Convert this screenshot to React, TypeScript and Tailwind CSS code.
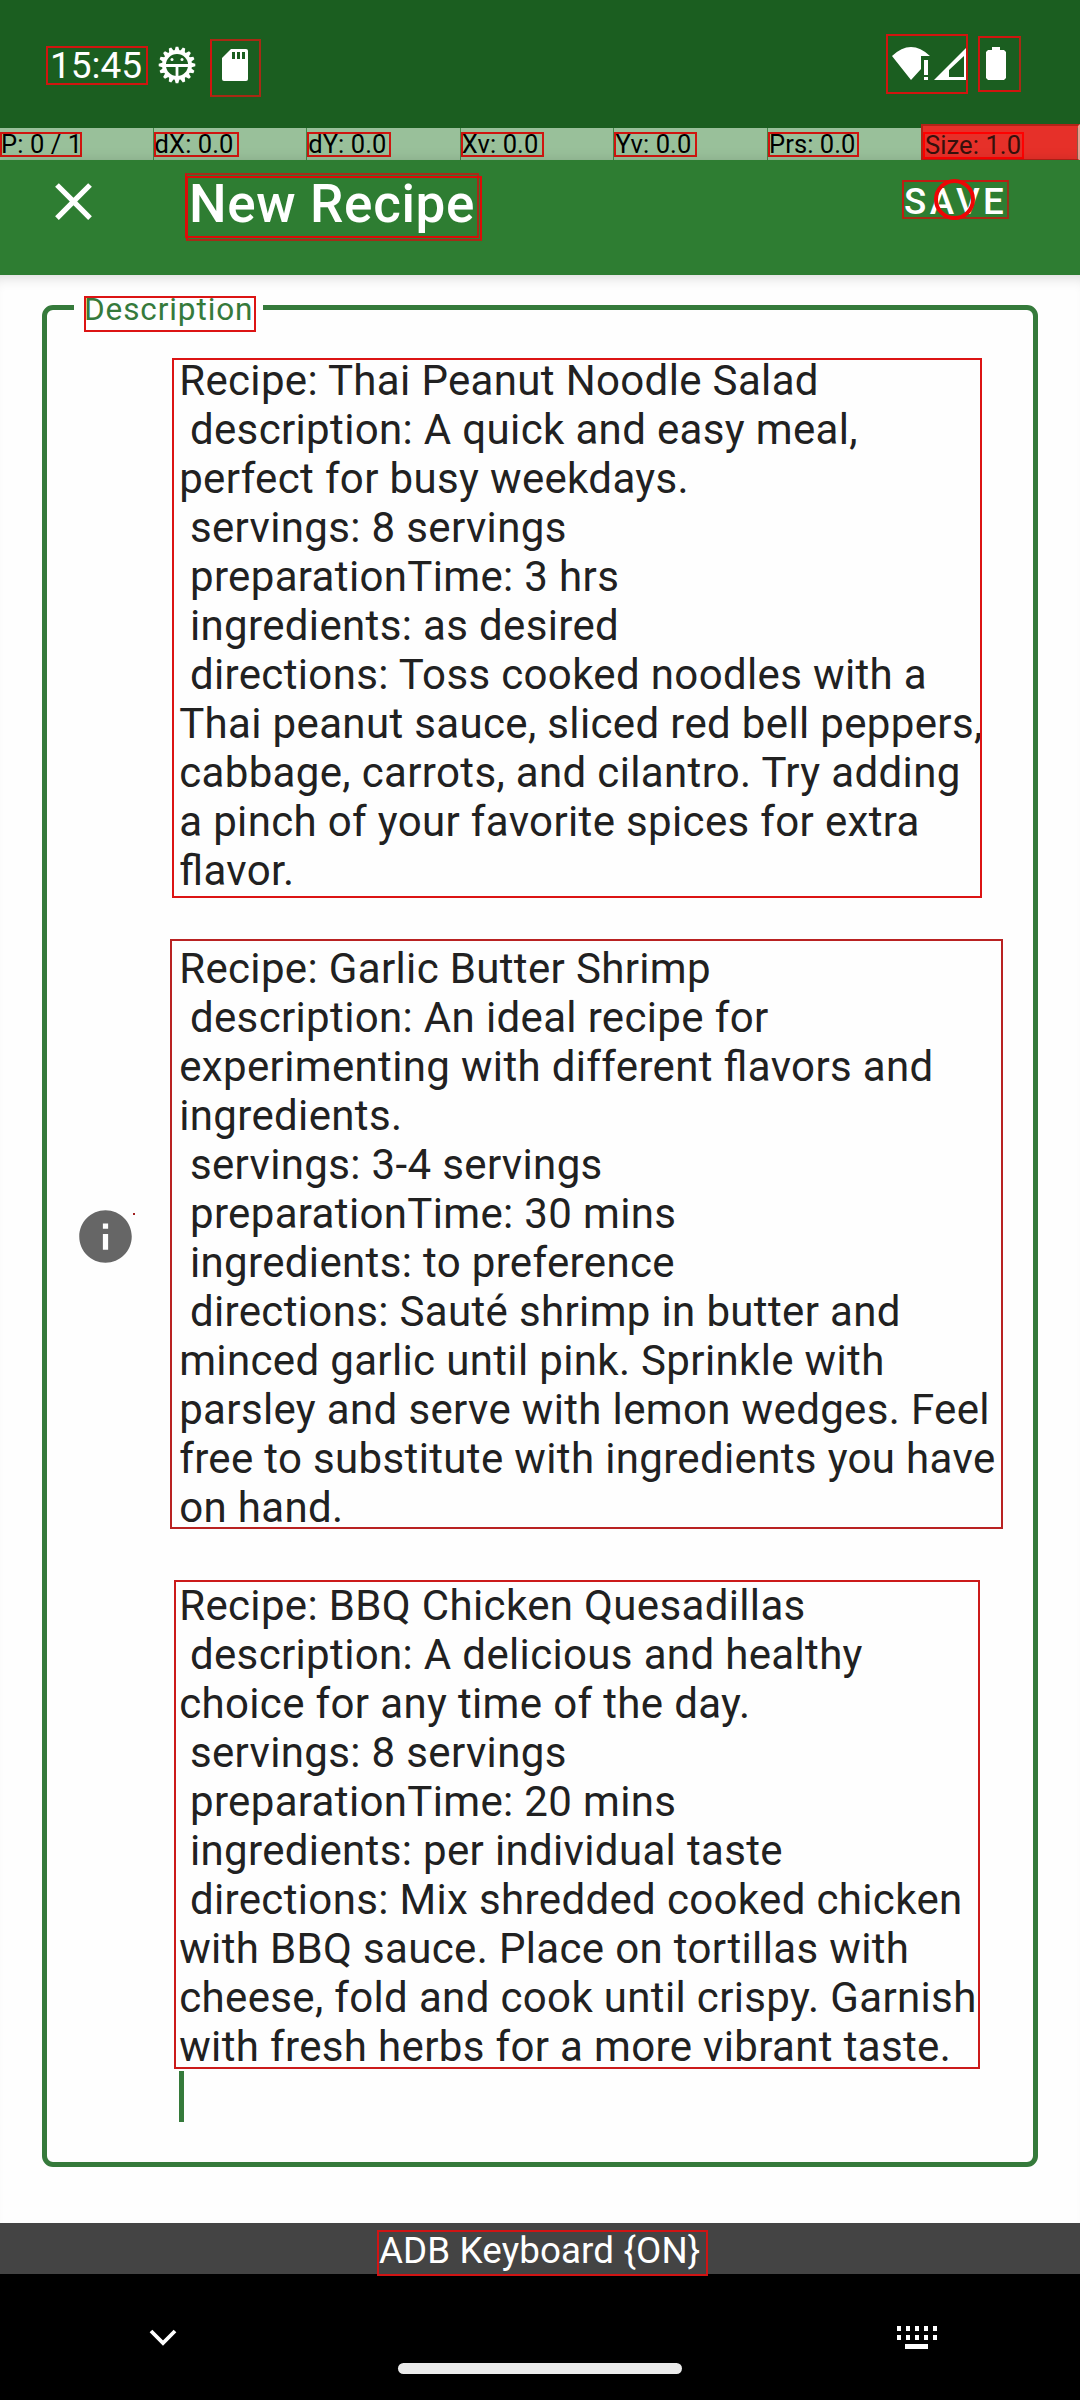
const recipes = [
  {
    box: "left-[172px] top-[83px] w-[810px] h-[540px] border-[#dc1414]",
    text: `Recipe: Thai Peanut Noodle Salad
 description: A quick and easy meal,
perfect for busy weekdays.
 servings: 8 servings
 preparationTime: 3 hrs
 ingredients: as desired
 directions: Toss cooked noodles with a
Thai peanut sauce, sliced red bell peppers,
cabbage, carrots, and cilantro. Try adding
a pinch of your favorite spices for extra
flavor.`,
  },
  {
    box: "left-[170px] top-[664px] w-[833px] h-[590px] border-[#b92222]",
    text: `Recipe: Garlic Butter Shrimp
 description: An ideal recipe for
experimenting with different flavors and
ingredients.
 servings: 3-4 servings
 preparationTime: 30 mins
 ingredients: to preference
 directions: Sauté shrimp in butter and
minced garlic until pink. Sprinkle with
parsley and serve with lemon wedges. Feel
free to substitute with ingredients you have
on hand.`,
  },
  {
    box: "left-[174px] top-[1305px] w-[806px] h-[489px] border-[#cb1a1a]",
    text: `Recipe: BBQ Chicken Quesadillas
 description: A delicious and healthy
choice for any time of the day.
 servings: 8 servings
 preparationTime: 20 mins
 ingredients: per individual taste
 directions: Mix shredded cooked chicken
with BBQ sauce. Place on tortillas with
cheese, fold and cook until crispy. Garnish
with fresh herbs for a more vibrant taste.`,
  },
];

const stats = [
  { label: "P: 0 / 1", box: "w-[82px]" },
  { label: "dX: 0.0", box: "w-[85px]" },
  { label: "dY: 0.0", box: "w-[84px]" },
  { label: "Xv: 0.0", box: "w-[83px]" },
  { label: "Yv: 0.0", box: "w-[83px]" },
  { label: "Prs: 0.0", box: "w-[91px]" },
];

const teeth = Array.from({ length: 16 }, (_, i) => i * 22.5);

function StatusBar() {
  return (
    <header className="flex h-32 items-start justify-between bg-[#1b5e20] pr-[59px] pl-[46px] text-white">
      <div className="flex items-start">
        <div className="mt-[46px] flex h-[39px] w-[102px] items-center border-2 border-[#d0150f] pl-[2px] text-[37px] leading-none whitespace-nowrap">
          15:45
        </div>
        <svg className="mt-[46px] ml-[10px] h-[38px] w-[38px]" viewBox="-19 -19 38 38">
          {teeth.map((a) => (
            <path key={a} d="M-2.8 -13 L-1.3 -18.3 H1.3 L2.8 -13Z" fill="white" transform={`rotate(${a})`} />
          ))}
          <circle r="13" fill="none" stroke="white" strokeWidth="3.8" />
          <path d="M-12 0.5H12M0 1V13" stroke="white" strokeWidth="2.8" />
          <circle cx="-5" cy="-5.5" r="1.5" fill="white" />
          <circle cx="5" cy="-5.5" r="1.5" fill="white" />
        </svg>
        <div className="mt-[39px] ml-[14px] h-[58px] w-[51px] border-2 border-[#a82a14] border-l-[#d0150f] pt-2 pl-[10px]">
          <svg className="h-8 w-[26px]" viewBox="0 0 26 32">
            <path d="M9 0H24Q26 0 26 2V30Q26 32 24 32H2Q0 32 0 30V9Z" fill="white" />
            <path d="M10 3h3v7h-3zM15 3h3v7h-3zM20 3h3v7h-3z" fill="#1b5e20" />
          </svg>
        </div>
      </div>
      <div className="flex items-start">
        <div className="mt-[34px] h-[60px] w-[82px] border-2 border-[#d0150f]">
          <svg className="h-14 w-[78px]" viewBox="888 36 78 56">
            <path d="M892 56Q911 38 930 56H921V69L911 80Z" fill="white" />
            <path d="M924 60h4v15h-4zM924 77h4v3h-4z" fill="white" />
            <path d="M934 80L966 48V80ZM949 77H964V56L949 70Z" fill="white" fillRule="evenodd" />
          </svg>
        </div>
        <div className="mt-9 ml-[10px] h-14 w-[43px] border-2 border-[#d0150f] border-r-[#a82a14] pt-[9px] pl-[6px]">
          <svg className="h-[33px] w-5" viewBox="0 0 20 33">
            <path d="M6 0H14V3H18L20 5V31L18 33H2L0 31V5L2 3H6Z" fill="white" />
          </svg>
        </div>
      </div>
    </header>
  );
}

function PointerStats() {
  return (
    <div className="relative flex h-8 bg-[#99c09a] text-[25.5px] text-black">
      {stats.map((s) => (
        <div key={s.label} className="h-8 w-[153.6px] shrink-0 border-r border-[#44874a] pt-1">
          <div className={`${s.box} flex h-[25px] items-center border-2 border-[#d0150f] leading-none tracking-[0.1px] whitespace-nowrap`}>
            <span className="-ml-px">{s.label}</span>
          </div>
        </div>
      ))}
      <div className="absolute -top-1 right-0 h-[37px] w-[159px] border-2 border-[#b42318] border-r-[#e8a090] bg-[#e63029] pt-[6px] text-[#35100c]">
        <div className="flex h-[27px] w-[101px] items-center border-2 border-[#ff0000] leading-none tracking-[0.1px] whitespace-nowrap">
          Size: 1.0
        </div>
        <div className="absolute top-[2px] right-0 h-[31px] w-px bg-[#8a5a48]" />
      </div>
    </div>
  );
}

function AppBar() {
  return (
    <div className="relative flex h-[115px] items-start bg-[#2e7d32] text-white shadow-[0_3px_14px_rgba(0,0,0,0.2)]">
      <svg className="mt-[10px] ml-[42px] h-[63px] w-[63px]" viewBox="0 0 24 24" fill="white">
        <path d="M19 6.41L17.59 5 12 10.59 6.41 5 5 6.41 10.59 12 5 17.59 6.41 19 12 13.41 17.59 19 19 17.59 13.41 12z" />
      </svg>
      <div className="relative mt-[13px] ml-20 h-[65px] w-[294px] border-2 border-t-[#a52c18] border-r-[#a52c18] border-b-[#dc0c08] border-l-[#dc0c08]">
        <div className="absolute top-px -left-px h-[65px] w-[296px] border-2 border-[#dc0c08] border-b-[#a52c18]" />
        <h1 className="ml-[2px] text-[53px] leading-[58px] font-medium tracking-[0.65px] whitespace-nowrap">New Recipe</h1>
      </div>
      <div className="relative mt-5 ml-auto mr-[71px] h-[39px] w-[107px] border-2 border-[#c01c12] border-r-[#96331a] border-b-[#a82a14] text-[36.75px] leading-[39px] font-medium tracking-[3.4px] whitespace-nowrap">
        SAVE
        <span className="absolute -top-[3px] left-[30px] h-[41px] w-[41px] rounded-full border-4 border-[#ee0505]" />
      </div>
    </div>
  );
}

export default function App() {
  return (
    <div className="flex h-[2400px] w-[1080px] flex-col overflow-hidden bg-white font-['Roboto',sans-serif]">
      <StatusBar />
      <PointerStats />
      <AppBar />
      <main className="relative h-[1948px] bg-[#fefefe] px-[42px] pt-[30px] [box-shadow:inset_0_12px_14px_-10px_rgba(0,0,0,0.16)]">
        <div className="flex h-[1862px] items-start rounded-[11px] border-5 border-[#357a3b]">
          <svg className="mt-[894.5px] ml-[26.8px] h-[63px] w-[63px]" viewBox="0 0 24 24" fill="#666">
            <path d="M12 2C6.48 2 2 6.48 2 12s4.48 10 10 10 10-4.48 10-10S17.52 2 12 2zm1 15h-2v-6h2v6zm0-8h-2V7h2v2z" />
          </svg>
          <div className="mt-[46px] ml-[42.4px] flex flex-col gap-[49px] text-[42px] leading-[49px] tracking-[0.35px] text-[#212121] [font-feature-settings:'liga'_1]">
            {recipes.map((r) => (
              <p key={r.box} className="whitespace-pre">
                {r.text}
              </p>
            ))}
            <span className="-mt-[49px] h-[51px] w-[5px] bg-[#357a3b]" />
          </div>
        </div>
        <div className="absolute top-[21px] left-[74px] h-9 w-[189px] bg-[#fefefe] pl-[10px]">
          <div className="h-9 w-[172px] border-2 border-[#dc1414] text-[31.5px] leading-[24px] tracking-[0.9px] whitespace-nowrap text-[#357a3b]">
            <span className="-ml-[2px]">Description</span>
          </div>
        </div>
        {recipes.map((r) => (
          <div key={r.box} className={`absolute border-2 ${r.box}`} />
        ))}
        <div className="absolute top-[938px] left-[133px] h-[2px] w-[2px] bg-[#a02020]" />
      </main>
      <div className="flex h-[51px] justify-center bg-[#444] text-white">
        <div className="relative mt-[7px] ml-[5px] h-[46px] w-[331px] border-2 border-[#d01414] text-[36.75px] leading-[37px] tracking-[0.12px] whitespace-nowrap">
          ADB Keyboard {"{ON}"}
        </div>
      </div>
      <nav className="flex grow justify-between bg-black px-[142px] pt-[42px]">
        <svg className="h-11 w-[42px]" viewBox="142 2316 42 44">
          <path d="M151 2331L163 2343L175 2331" fill="none" stroke="white" strokeWidth="3.8" />
        </svg>
        <div className="mt-[47px] h-[11px] w-[284px] rounded-full bg-[#ebebeb]" />
        <svg className="h-11 w-[42px]" viewBox="897 2316 42 44" fill="white">
          {[0, 1, 2, 3, 4].map((i) => (
            <path key={i} d={`M${898 + i * 9} 2326h4v5h-4zM${898 + i * 9} 2335h4v5h-4z`} />
          ))}
          <path d="M906 2344h23v5h-23z" />
        </svg>
      </nav>
    </div>
  );
}
